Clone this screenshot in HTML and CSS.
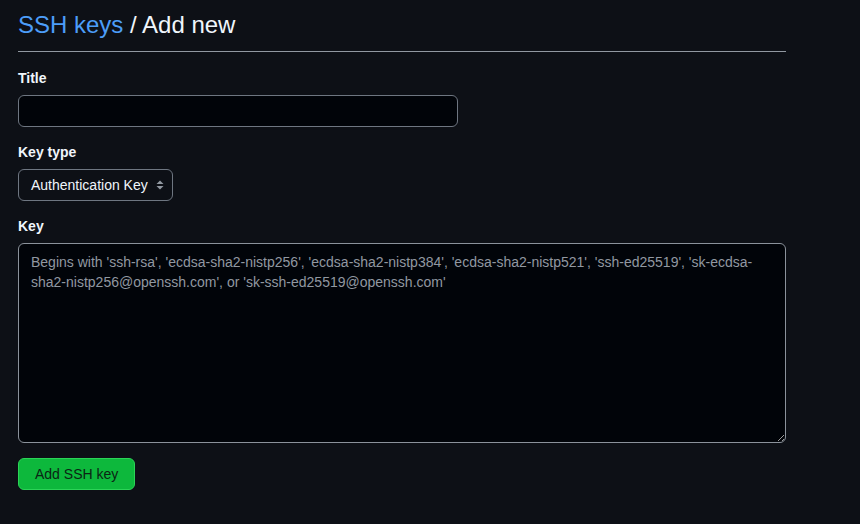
FILE: index.html
```html
<!DOCTYPE html>
<html>
<head>
<meta charset="utf-8">
<link rel="stylesheet" href="styles.css">
</head>
<body>
<div class="page">
  <div class="header">
    <h2 class="title"><a class="crumb" href="#">SSH keys</a> / Add new</h2>
  </div>
  <form class="form">
    <label class="label" for="t">Title</label>
    <input id="t" class="input" type="text">
    <label class="label" for="k">Key type</label>
    <div class="select">
      <span class="select-text">Authentication Key</span>
      <svg class="select-arrows" width="8" height="12" viewBox="0 0 8 12"><path d="M4 1.5 L7.5 5 H0.5 Z M4 10.5 L7.5 7 H0.5 Z" fill="#9198a1"/></svg>
    </div>
    <label class="label" for="key">Key</label>
    <textarea id="key" class="textarea" placeholder="Begins with 'ssh-rsa', 'ecdsa-sha2-nistp256', 'ecdsa-sha2-nistp384', 'ecdsa-sha2-nistp521', 'ssh-ed25519', 'sk-ecdsa-sha2-nistp256@openssh.com', or 'sk-ssh-ed25519@openssh.com'"></textarea>
    <div class="actions"><button type="button" class="btn">Add SSH key</button></div>
  </form>
</div>
</body>
</html>
```
FILE: styles.css
```css
html, body {
  margin: 0;
  padding: 0;
  background: #0d1016;
  color: #f0f6fc;
  font-family: "Liberation Sans", Arial, sans-serif;
}
.page {
  width: 768px;
  padding: 0 18px;
}
.header {
  padding-top: 7px;
  padding-bottom: 8px;
  border-bottom: 1px solid #9198a1;
}
.title {
  margin: 0;
  font-size: 24px;
  font-weight: 400;
  line-height: 36px;
  color: #f0f6fc;
}
.crumb {
  color: #4c9df8;
  text-decoration: none;
}
.form {
  display: flex;
  flex-direction: column;
  align-items: flex-start;
}
.label {
  font-size: 14px;
  font-weight: 700;
  line-height: 21px;
  margin-top: 15px;
  margin-bottom: 6px;
}
.form > .label:first-child {
  margin-top: 16px;
}
.input {
  box-sizing: border-box;
  width: 440px;
  height: 32px;
  background: #010409;
  border: 1px solid #6e7681;
  border-radius: 6px;
  color: #f0f6fc;
  padding: 0 12px;
  font: 14px "Liberation Sans", Arial, sans-serif;
  outline: none;
}
.select {
  box-sizing: border-box;
  width: 155px;
  height: 32px;
  border: 1px solid #6e7681;
  border-radius: 6px;
  background: #0d1016;
  display: flex;
  align-items: center;
  justify-content: space-between;
  padding: 0 8px 0 12px;
  font-size: 14px;
  color: #f0f6fc;
}
.select-arrows {
  display: block;
}
.textarea {
  box-sizing: border-box;
  width: 768px;
  height: 200px;
  background: #010409;
  border: 1px solid #8b929b;
  border-radius: 6px;
  color: #f0f6fc;
  padding: 8px 12px;
  font: 14px/20px "Liberation Sans", Arial, sans-serif;
  outline: none;
  resize: vertical;
  margin: 0;
  display: block;
}
.textarea::placeholder {
  color: #9198a1;
  opacity: 1;
}
.actions {
  margin-top: 15px;
}
.btn {
  box-sizing: border-box;
  height: 32px;
  white-space: nowrap;
  background: #0db83c;
  border: 1px solid #2bd457;
  border-radius: 6px;
  color: #0b2414;
  font: 14px "Liberation Sans", Arial, sans-serif;
  padding: 0 16px;
  cursor: pointer;
}
```
